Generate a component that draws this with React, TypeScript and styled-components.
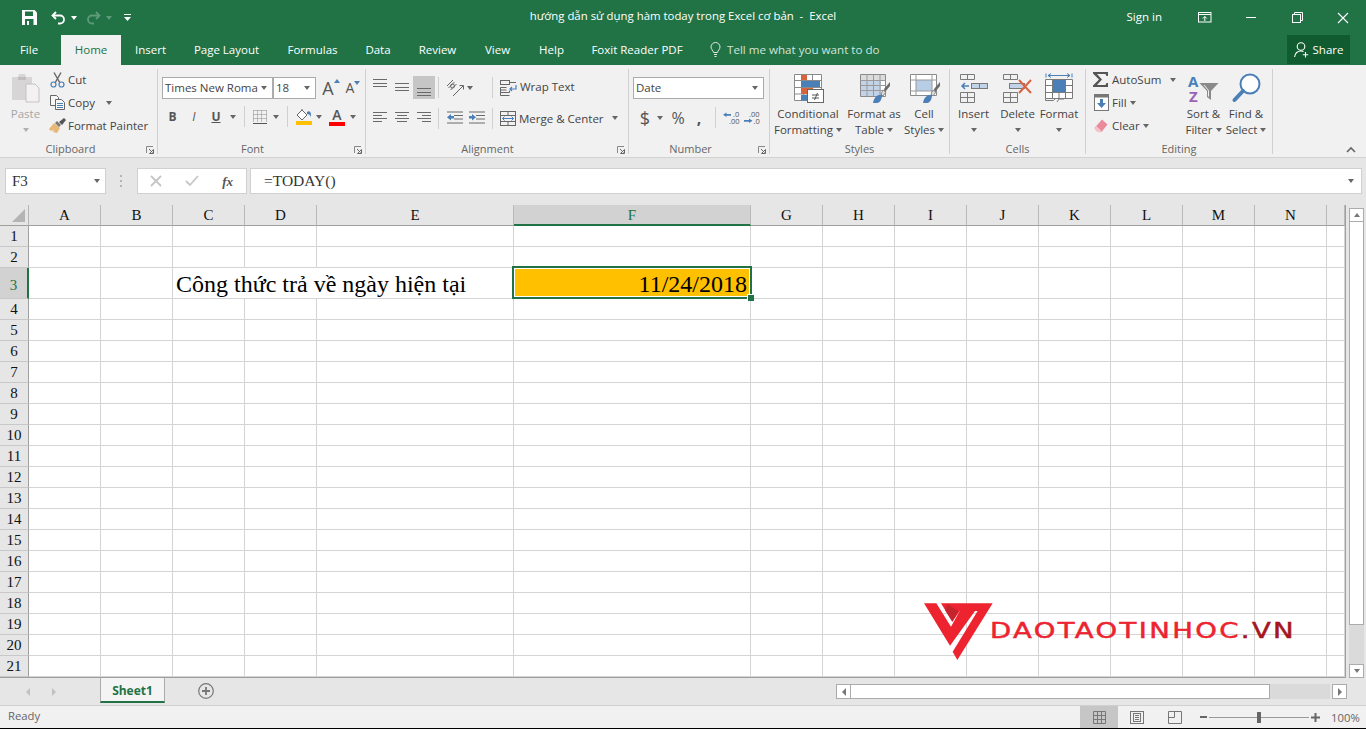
import React from 'react'
import styled, { createGlobalStyle } from 'styled-components'

const UI = '"Open Sans", "Noto Sans", "Liberation Sans", sans-serif'
const SERIF = '"Liberation Serif", "Times New Roman", serif'
const GREEN = '#217346'
const BLUE = '#4a7fb8'

const GlobalStyle = createGlobalStyle`
  html, body { margin: 0; padding: 0; background: #000; overflow: hidden; }
  body { font-family: ${UI}; font-size: 12px; color: #444; }
  * { box-sizing: border-box; }
  svg { overflow: visible; }
`

const Page = styled.div`
  width: 1366px;
  height: 728px;
  background: #f1f1f1;
  display: flex;
  flex-direction: column;
  overflow: hidden;
`

/* title bar */
const TitleBar = styled.div`
  height: 35px;
  background: ${GREEN};
  color: #fff;
  display: grid;
  grid-template-columns: 1fr auto 1fr;
  align-items: center;
`
const Quick = styled.div`
  display: flex;
  align-items: center;
  padding-left: 15px;
`
const QuickBtn = styled.div<{ $w: number; $mr?: number }>`
  width: ${p => p.$w}px;
  margin-right: ${p => p.$mr || 0}px;
  display: flex;
  justify-content: center;
  align-items: center;
`
const Title = styled.div`
  font-size: 11.4px;
  white-space: pre;
  padding-bottom: 4px;
`
const WindowArea = styled.div`
  display: flex;
  justify-content: flex-end;
  align-items: center;
`
const SignIn = styled.div`
  margin-right: 20px;
  padding-bottom: 3px;
  font-size: 11.5px;
`
const WinBtn = styled.div`
  width: 46px;
  display: flex;
  justify-content: center;
`

/* tabs */
const TabRow = styled.div`
  height: 30px;
  background: ${GREEN};
  color: #fff;
  display: flex;
`
const Tab = styled.div<{ $w: number; $on?: boolean; $mr?: number }>`
  width: ${p => p.$w}px;
  margin-right: ${p => p.$mr || 0}px;
  padding-bottom: 1px;
  display: flex;
  justify-content: center;
  align-items: center;
  font-size: 11.5px;
  background: ${p => (p.$on ? '#f1f1f1' : 'transparent')};
  color: ${p => (p.$on ? GREEN : '#fff')};
`
const TellMe = styled.div`
  margin-left: 15px;
  padding-bottom: 2px;
  display: flex;
  align-items: center;
  gap: 6px;
  font-size: 11.6px;
  color: #d3e3da;
`
const ShareBtn = styled.div`
  margin-left: auto;
  margin-right: 16px;
  width: 63px;
  height: 29px;
  background: #105c30;
  display: flex;
  align-items: center;
  justify-content: center;
  gap: 4px;
  font-size: 11.5px;
`

/* ribbon */
const Ribbon = styled.div`
  height: 93px;
  padding-top: 4px;
  background: #f1f1f1;
  border-bottom: 1px solid #d2d2d2;
  display: flex;
  position: relative;
`
const Group = styled.div<{ $w: number }>`
  width: ${p => p.$w}px;
  height: 85px;
  border-right: 1px solid #d0d0d0;
  display: flex;
  flex-direction: column;
  position: relative;
`
const GroupBody = styled.div`
  flex: 1;
  display: flex;
  min-height: 0;
`
const GroupLabel = styled.div<{ $pr?: number }>`
  height: 10px;
  line-height: 10px;
  padding-right: ${p => p.$pr || 0}px;
  text-align: center;
  font-size: 11px;
  color: #666;
`
const Launcher = styled.div`
  position: absolute;
  right: 3px;
  bottom: 0;
  width: 8px;
  height: 8px;
  display: flex;
`
const Collapse = styled.div`
  position: absolute;
  right: 10px;
  bottom: 4px;
  display: flex;
`
const PasteBtn = styled.div`
  width: 41px;
  margin-left: 5px;
  padding-top: 4px;
  display: flex;
  flex-direction: column;
  align-items: center;
  color: #a6a6a6;
  line-height: 16px;
  font-size: 11.5px;
`
const SmallCol = styled.div<{ $ml?: number; $w?: number }>`
  margin-left: ${p => p.$ml || 0}px;
  width: ${p => (p.$w ? p.$w + 'px' : 'auto')};
  margin-top: -1px;
  display: flex;
  flex-direction: column;
`
const SmallRow = styled.div`
  height: 23px;
  display: flex;
  align-items: center;
  white-space: nowrap;
  font-size: 11.5px;
`
const SmallIcon = styled.div`
  width: 16px;
  display: flex;
  justify-content: center;
  margin-right: 3px;
`
const Stack = styled.div<{ $ml?: number; $pt: number; $gap: number }>`
  margin-left: ${p => p.$ml || 0}px;
  padding-top: ${p => p.$pt}px;
  display: flex;
  flex-direction: column;
  gap: ${p => p.$gap}px;
`
const ToolRow = styled.div<{ $h?: number }>`
  height: ${p => p.$h || 22}px;
  display: flex;
  align-items: center;
`
const Tool = styled.div<{ $w: number; $on?: boolean }>`
  width: ${p => p.$w}px;
  height: ${p => (p.$on ? '23px' : 'auto')};
  display: flex;
  justify-content: center;
  align-items: center;
  background: ${p => (p.$on ? '#c6c6c6' : 'transparent')};
`
const CaretSlot = styled.div<{ $w: number }>`
  width: ${p => p.$w}px;
  display: flex;
  justify-content: center;
`
const Caret = styled.span<{ $up?: boolean; $c?: string }>`
  display: inline-block;
  flex: none;
  width: 0;
  height: 0;
  border-left: 3.5px solid transparent;
  border-right: 3.5px solid transparent;
  ${p => (p.$up ? 'border-bottom' : 'border-top')}: 4px solid ${p => p.$c || '#666'};
`
const VSep = styled.div<{ $ml: number; $mr: number }>`
  width: 1px;
  height: 21px;
  margin: 0 ${p => p.$mr}px 0 ${p => p.$ml}px;
  background: #d0d0d0;
`
const Select = styled.div<{ $w: number }>`
  width: ${p => p.$w}px;
  height: 22px;
  background: #fff;
  border: 1px solid #ababab;
  display: flex;
  align-items: center;
  justify-content: space-between;
  padding: 0 5px 1px 2px;
  font-size: 11.5px;
  white-space: nowrap;
`
const FontName = styled.span`
  width: 94px;
`
const FontGlyph = styled.span<{ $size?: number; $w?: number; $i?: boolean; $u?: boolean; $serif?: boolean }>`
  font-family: ${p => (p.$serif ? SERIF : UI)};
  font-size: ${p => p.$size || 12}px;
  font-weight: ${p => p.$w || 400};
  font-style: ${p => (p.$i ? 'italic' : 'normal')};
  text-decoration: ${p => (p.$u ? 'underline' : 'none')};
  line-height: 1;
  color: #555;
`
const GrowGlyph = styled.div`
  position: relative;
  display: flex;
`
const GrowMark = styled.span`
  position: absolute;
  right: -6px;
  top: 0;
  display: flex;
`
const ColorA = styled.div`
  display: flex;
  flex-direction: column;
  align-items: center;
  width: 16px;
  line-height: 1;
`
const ColorBar = styled.div<{ $c: string }>`
  width: 16px;
  height: 4px;
  background: ${p => p.$c};
`
const ToolText = styled.span<{ $ml?: number; $raise?: boolean }>`
  margin-left: ${p => p.$ml ?? 3}px;
  margin-bottom: ${p => (p.$raise ? '2px' : '0')};
  font-size: 11.5px;
  white-space: nowrap;
`
const InlineCaret = styled.span<{ $ml?: number }>`
  margin-left: ${p => p.$ml ?? 3}px;
  display: flex;
`
const BigBtn = styled.div<{ $w: number }>`
  width: ${p => p.$w}px;
  padding-top: 4px;
  display: flex;
  flex-direction: column;
  align-items: center;
  font-size: 11.5px;
  line-height: 16px;
  white-space: nowrap;
`
const BigIcon = styled.div`
  height: 30px;
  margin-bottom: 3px;
  display: flex;
  align-items: center;
`
const BigLine = styled.div`
  height: 16px;
  display: flex;
  align-items: center;
  gap: 3px;
`

/* formula bar */
const FormulaBar = styled.div`
  height: 47px;
  background: #e6e6e6;
  padding: 10px 4px 0 5px;
  display: flex;
  align-items: flex-start;
`
const NameBox = styled.div`
  width: 101px;
  height: 26px;
  background: #fff;
  border: 1px solid #d0d0d0;
  display: flex;
  align-items: center;
  justify-content: space-between;
  padding: 0 5px 0 6px;
  font-family: ${SERIF};
  font-size: 15px;
  color: #333;
`
const Dots = styled.div`
  width: 31px;
  height: 26px;
  display: flex;
  justify-content: center;
  align-items: center;
`
const FxBox = styled.div`
  width: 110px;
  height: 26px;
  background: #fff;
  border: 1px solid #d0d0d0;
  display: flex;
  align-items: center;
  justify-content: space-between;
  padding: 0 13px 0 12px;
`
const Formula = styled.div`
  flex: 1;
  height: 26px;
  margin-left: 3px;
  background: #fff;
  border: 1px solid #d0d0d0;
  display: flex;
  align-items: center;
  justify-content: space-between;
  padding: 0 7px 0 13px;
  font-family: ${SERIF};
  font-size: 15.5px;
  color: #333;
`

/* sheet */
const Main = styled.div`
  height: 473px;
  display: flex;
  background: #e6e6e6;
`
const Sheet = styled.div`
  width: 1346px;
  position: relative;
  display: grid;
  grid-template-columns: 29px 72px 72px 72px 72px 197px 237px 72px 72px 72px 72px 72px 72px 72px 72px 18px;
  grid-template-rows: 21px 21px 21px 31px repeat(18, 21px);
  border-right: 1px solid #9f9f9f;
  border-bottom: 1px solid #9f9f9f;
  background: #fff;
`
const Corner = styled.div`
  background: #e6e6e6;
  border-right: 1px solid #b5b5b5;
  border-bottom: 1px solid #9f9f9f;
  display: flex;
  align-items: flex-end;
  justify-content: flex-end;
  padding: 0 3px 3px 0;
`
const ColHead = styled.div<{ $on?: boolean }>`
  background: ${p => (p.$on ? '#d2d2d2' : '#e6e6e6')};
  border-right: 1px solid #b9b9b9;
  border-bottom: ${p => (p.$on ? `2px solid ${GREEN}` : '1px solid #9f9f9f')};
  padding-top: ${p => (p.$on ? '2px' : '1px')};
  font-family: ${SERIF};
  font-size: 15px;
  color: ${p => (p.$on ? GREEN : '#111')};
  display: flex;
  align-items: center;
  justify-content: center;
`
const RowHead = styled.div<{ $on?: boolean }>`
  background: ${p => (p.$on ? '#d2d2d2' : '#e6e6e6')};
  border-right: ${p => (p.$on ? `2px solid ${GREEN}` : '1px solid #9f9f9f')};
  border-bottom: 1px solid #c8c8c8;
  font-family: ${SERIF};
  font-size: 15px;
  color: ${p => (p.$on ? GREEN : '#111')};
  display: flex;
  align-items: center;
  justify-content: center;
  padding-top: ${p => (p.$on ? '5px' : '0')};
`
const Cell = styled.div<{ $span?: number }>`
  grid-column: span ${p => p.$span || 1};
  border-right: 1px solid #d4d4d4;
  border-bottom: 1px solid #d4d4d4;
  font-family: ${SERIF};
  font-size: 24px;
  color: #000;
  white-space: nowrap;
  padding: 2px 3px 0;
  display: flex;
  align-items: center;
  overflow: visible;
`
const ActiveCell = styled(Cell)`
  position: relative;
  background: #ffc000;
  justify-content: flex-end;
  &::before {
    content: '';
    position: absolute;
    left: -2px;
    top: -2px;
    right: -2px;
    bottom: -1px;
    border: 2px solid ${GREEN};
    box-shadow: inset 0 0 0 1px #fff;
  }
  &::after {
    content: '';
    position: absolute;
    right: -4px;
    bottom: -3px;
    width: 6px;
    height: 6px;
    background: ${GREEN};
    border: 1px solid #fff;
    border-right: 0;
    border-bottom: 0;
  }
`
const Watermark = styled.div`
  position: absolute;
  left: 915px;
  top: 390px;
  display: flex;
  align-items: flex-start;
  pointer-events: none;
`
const WordMark = styled.div`
  margin: 23px 0 0 -5px;
  font-family: "DejaVu Sans", sans-serif;
  font-size: 22px;
  line-height: 26px;
  letter-spacing: 1.9px;
  color: #ed2330;
  -webkit-text-stroke: 0.5px currentColor;
  white-space: nowrap;
  transform: scaleX(1.25);
  transform-origin: left center;
`
const WordEnd = styled.span`
  color: #a6141f;
`

/* scrollbars */
const VScroll = styled.div`
  width: 20px;
  padding: 3px 2px 0 3px;
  display: flex;
  flex-direction: column;
`
const ScrollBtn = styled.div`
  height: 14px;
  flex: none;
  background: #fff;
  border: 1px solid #ababab;
  display: flex;
  align-items: center;
  justify-content: center;
`
const VThumb = styled.div`
  height: 403px;
  flex: none;
  background: #fff;
  border-left: 1px solid #ababab;
  border-right: 1px solid #ababab;
  border-bottom: 1px solid #ababab;
`
const VTrack = styled.div`
  flex: 1;
  background: #dadada;
`
const SheetBar = styled.div`
  height: 28px;
  flex: none;
  background: #e6e6e6;
  border-bottom: 1px solid #d0d0d0;
  display: flex;
  align-items: flex-start;
`
const NavArrows = styled.div`
  width: 100px;
  height: 27px;
  padding-left: 26px;
  display: flex;
  align-items: center;
  gap: 22px;
`
const SheetTab = styled.div`
  width: 65px;
  height: 26px;
  margin-top: -1px;
  padding-top: 3px;
  background: #f4f4f4;
  border-left: 1px solid #ababab;
  border-right: 1px solid #ababab;
  border-bottom: 2px solid ${GREEN};
  color: ${GREEN};
  font-size: 12px;
  font-weight: 700;
  display: flex;
  align-items: center;
  justify-content: center;
`
const AddSheet = styled.div`
  margin: 5px 0 0 33px;
  display: flex;
`
const HScroll = styled.div`
  margin: 6px 19px 0 auto;
  width: 511px;
  height: 15px;
  display: flex;
`
const HBtn = styled.div`
  width: 15px;
  flex: none;
  background: #fff;
  border: 1px solid #ababab;
  display: flex;
  align-items: center;
  justify-content: center;
`
const HThumb = styled.div`
  width: 419px;
  flex: none;
  background: #fff;
  border: 1px solid #ababab;
  border-left: 0;
`
const HTrack = styled.div`
  flex: 1;
  margin-right: 2px;
  background: #dadada;
`
const Triangle = styled.span<{ $left?: boolean; $c?: string }>`
  display: inline-block;
  width: 0;
  height: 0;
  border-top: 4px solid transparent;
  border-bottom: 4px solid transparent;
  ${p => (p.$left ? 'border-right' : 'border-left')}: 4px solid ${p => p.$c || '#777'};
`

/* status bar */
const StatusBar = styled.div`
  flex: 1;
  background: #f1f1f1;
  padding-left: 8px;
  display: flex;
  align-items: center;
  font-size: 11.3px;
  color: #666;
`
const ReadyText = styled.span`
  padding-bottom: 3px;
`
const StatusRight = styled.div`
  margin-left: auto;
  height: 100%;
  display: flex;
  align-items: center;
`
const ViewBtn = styled.div<{ $on?: boolean }>`
  width: 38px;
  height: 100%;
  background: ${p => (p.$on ? '#c6c6c6' : 'transparent')};
  display: flex;
  align-items: center;
  justify-content: center;
`
const ZoomMinus = styled.div`
  width: 7px;
  height: 2px;
  margin-left: 6px;
  background: #666;
`
const ZoomSlider = styled.div`
  width: 100px;
  height: 1px;
  margin: 0 2px;
  background: #9a9a9a;
  display: flex;
  justify-content: center;
  align-items: center;
`
const ZoomKnob = styled.div`
  width: 4px;
  height: 11px;
  background: #666;
`
const ZoomLabel = styled.div`
  width: 35px;
  margin-left: 11px;
  font-size: 11.3px;
`

/* icons */
const Lines = ({ w = 14, h = 20, rows, c = '#6a6a6a' }: { w?: number; h?: number; rows: number[][]; c?: string }) => (
  <svg width={w} height={h} viewBox={`0 0 ${w} ${h}`}>
    {rows.map((r, i) => <rect key={i} x={r[0]} y={r[1]} width={r[2]} height="1" fill={c} />)}
  </svg>
)

const Launch = () => (
  <svg width="8" height="8" viewBox="0 0 8 8">
    <path d="M0.5 7V0.5H7" fill="none" stroke="#888" />
    <path d="M3 3l3.5 3.5M7.5 3.5v4h-4z" fill="none" stroke="#666" />
  </svg>
)

const SaveIcon = () => (
  <svg width="15" height="15" viewBox="0 0 15 15">
    <path d="M0 0h12.5L15 2.5V15H0z" fill="#fff" />
    <rect x="3" y="1.5" width="8" height="4.5" fill={GREEN} />
    <rect x="3" y="9" width="8.5" height="6" fill={GREEN} />
    <rect x="5" y="11" width="2" height="4" fill="#fff" />
  </svg>
)
const UndoIcon = () => (
  <svg width="15" height="14" viewBox="0 0 15 14">
    <path d="M5 1L1.5 4.5 5 8" fill="none" stroke="#fff" strokeWidth="1.8" />
    <path d="M2 4.5h7a4 4 0 0 1 0 8H7" fill="none" stroke="#fff" strokeWidth="1.8" />
  </svg>
)
const RedoIcon = () => (
  <svg width="15" height="14" viewBox="0 0 15 14">
    <path d="M10 1l3.5 3.5L10 8" fill="none" stroke="#5f9a7b" strokeWidth="1.8" />
    <path d="M13 4.5H6a4 4 0 0 0 0 8h2" fill="none" stroke="#5f9a7b" strokeWidth="1.8" />
  </svg>
)
const CustomizeIcon = () => (
  <svg width="7" height="8" viewBox="0 0 7 8">
    <rect x="0" y="0" width="7" height="1" fill="#fff" />
    <path d="M0 3h7L3.5 7z" fill="#fff" />
  </svg>
)
const DisplayIcon = () => (
  <svg width="14" height="11" viewBox="0 0 14 11" fill="none" stroke="#fff">
    <rect x="0.5" y="0.5" width="12.5" height="9.5" />
    <path d="M0.5 2.5h12.5M6.8 9V4.5M4.8 6.5l2-2 2 2" />
  </svg>
)
const MinIcon = () => <svg width="11" height="11" viewBox="0 0 11 11"><rect y="5" width="10" height="1" fill="#fff" /></svg>
const RestoreIcon = () => (
  <svg width="11" height="11" viewBox="0 0 11 11" fill="none" stroke="#fff">
    <rect x="0.5" y="2.5" width="8" height="8" />
    <path d="M2.5 2.5v-2h8v8h-2" />
  </svg>
)
const CloseIcon = () => (
  <svg width="12" height="12" viewBox="0 0 12 12"><path d="M1 1l10 10M11 1L1 11" stroke="#fff" strokeWidth="1.1" /></svg>
)
const BulbIcon = () => (
  <svg width="11" height="15" viewBox="0 0 11 15" fill="none" stroke="#dfeae4">
    <path d="M3.5 10.5C3.3 8.5 1 7.5 1 5a4.5 4.5 0 0 1 9 0c0 2.5-2.3 3.5-2.5 5.5z" />
    <path d="M4 12.5h3M4.5 14.5h2" />
  </svg>
)
const ShareIcon = () => (
  <svg width="15" height="16" viewBox="0 0 15 16" fill="none" stroke="#fff" strokeWidth="1.1">
    <circle cx="7" cy="4.5" r="3.8" />
    <path d="M0.6 15c0.5-3.5 2.5-6 6.4-6 1 0 1.8 0.2 2.5 0.5M11.5 10v5.5M8.8 12.8h5.4" />
  </svg>
)
const PasteIcon = () => (
  <svg width="29" height="30" viewBox="0 0 29 30">
    <path d="M1 4h6l1-3h6l1 3h6v23H1z" fill="#d8d5d7" />
    <rect x="7" y="4" width="8" height="3" fill="#c0bcbf" />
    <path d="M15 11h9l4 4v14H15z" fill="#f3f1f2" stroke="#c6c2c5" />
  </svg>
)
const CutIcon = () => (
  <svg width="15" height="16" viewBox="0 0 15 16" fill="none">
    <path d="M4 0.5L10 11M11 0.5L5 11" stroke="#6a6a6a" strokeWidth="1.5" />
    <circle cx="3.5" cy="12.5" r="2.5" stroke={BLUE} strokeWidth="1.2" />
    <circle cx="11.5" cy="12.5" r="2.5" stroke={BLUE} strokeWidth="1.2" />
  </svg>
)
const CopyIcon = () => (
  <svg width="15" height="15" viewBox="0 0 15 15" fill="#f6f6f6" stroke="#666">
    <path d="M0.5 0.5h6l2 2v8h-8z" />
    <path d="M5.5 4.5h6l3 3v7h-9z" />
    <path d="M7 8.5h6M7 10.5h6M7 12.5h6" stroke={BLUE} />
  </svg>
)
const PainterIcon = () => (
  <svg width="17" height="16" viewBox="0 0 17 16">
    <path d="M0 11l5-6 6 5-3 5-4-1 1-2-3 1z" fill="#e8b878" />
    <path d="M6 5l2-2 4 4-2 2z" fill="#777" />
    <path d="M10 4l5-4 2 2-4 5z" fill="#555" />
  </svg>
)
const FillIcon = () => (
  <svg width="16" height="12" viewBox="0 0 16 12">
    <path d="M1 6l5-5 5 5-5 5z" fill="#fff" stroke="#666" />
    <path d="M6 1V0" stroke="#666" />
    <path d="M11 3c2-1.5 4-0.5 4 3l0 2c-1-2-2-3-4-3z" fill={BLUE} />
  </svg>
)
const BordersIcon = () => (
  <svg width="14" height="14" viewBox="0 0 14 14">
    <path d="M0.5 0.5h13M0.5 4.5h13M0.5 8.5h13M0.5 0.5v12M4.5 0.5v12M8.5 0.5v12M13.5 0.5v12" stroke="#888" strokeDasharray="1 1" fill="none" />
    <rect y="13" width="14" height="1" fill="#555" />
  </svg>
)
const OrientIcon = () => (
  <svg width="19" height="18" viewBox="0 0 19 18" fill="none" stroke="#666">
    <path d="M1 7l6-6M2.5 9l6-6M4.5 11l6-6" />
    <circle cx="6.5" cy="7" r="2" stroke="#666" />
    <path d="M7 17L17 7M13.5 6.5H17.5V10.5" stroke="#666" />
  </svg>
)
const IndentIcon = ({ flip }: { flip?: boolean }) => (
  <svg width="16" height="14" viewBox="0 0 16 14">
    <path d="M0 1h16M7 4.5h9M7 8h9M0 12h16" stroke="#6a6a6a" />
    {flip
      ? <path d="M0 5h3V3l4 3.2-4 3.2V7.4H0z" fill={BLUE} />
      : <path d="M7 5H4V3L0 6.2l4 3.2V7.4h3z" fill={BLUE} />}
  </svg>
)
const WrapIcon = () => (
  <svg width="17" height="16" viewBox="0 0 17 16" fill="none">
    <rect x="0.5" y="0.5" width="9" height="4" stroke="#666" />
    <path d="M0.5 7.5h6M0.5 10h6M0.5 12.5h9v-2M0.5 7.5v8h9" stroke="#666" />
    <path d="M10 2.5h6" stroke="#666" />
    <path d="M16 5v4h-6M12 7l-2 2 2 2" stroke={BLUE} strokeWidth="1.2" />
  </svg>
)
const MergeIcon = () => (
  <svg width="16" height="15" viewBox="0 0 16 15" fill="none" stroke="#666">
    <rect x="0.5" y="0.5" width="15" height="14" />
    <path d="M0.5 4.5h15M0.5 10.5h15M8 0.5v4M8 10.5v4" />
    <path d="M2.5 7.5h11M4.5 5.5l-2 2 2 2M11.5 5.5l2 2-2 2" stroke={BLUE} />
  </svg>
)
const DecInc = () => (
  <svg width="19" height="14" viewBox="0 0 19 14">
    <path d="M8 3H3.5V1.500L0 3.800l3.500 2.300V4.800H8z" fill={BLUE} />
    <text x="10" y="6" fontSize="7.5" fontFamily={UI} fill="#555">.0</text>
    <text x="6" y="13" fontSize="7.5" fontFamily={UI} fill="#555">.00</text>
  </svg>
)
const DecDec = () => (
  <svg width="18" height="14" viewBox="0 0 18 14">
    <text x="5" y="6" fontSize="7.5" fontFamily={UI} fill="#555">.00</text>
    <path d="M0 9h5V7.500l3.500 2.300L5 12v-1.300H0z" fill={BLUE} />
    <text x="9.5" y="13" fontSize="7.5" fontFamily={UI} fill="#555">.0</text>
  </svg>
)
const CondIcon = () => (
  <svg width="31" height="30" viewBox="0 0 31 30">
    <path d="M1.5 1.5h27v26h-27zM10.5 1.5v26M19.5 1.5v20M1.5 7.5h27M1.5 14.5h27M1.5 21h27" fill="#fff" stroke="#8a8a8a" />
    <rect x="8" y="2" width="6" height="5" fill="#d9623f" />
    <rect x="8" y="8" width="19" height="6" fill={BLUE} />
    <rect x="8" y="15" width="12" height="6" fill="#d9623f" />
    <rect x="8" y="22" width="6" height="5.5" fill={BLUE} />
    <rect x="14.5" y="16.5" width="16" height="13" fill="#fff" stroke="#666" />
    <path d="M19 22h7M19 25h7M24.5 20l-3 7" stroke="#555" fill="none" />
  </svg>
)
const BrushOver = () => (
  <>
    <path d="M14 30c1-6 5-9 9-8 0 4-2 8-5 8z" fill={BLUE} />
    <path d="M22 21l2-4 3 2-3 4z" fill="#ddd" stroke="#888" />
    <path d="M25 16l6-7v4l-5 6z" fill="#6a6a6a" />
  </>
)
const TableIcon = () => (
  <svg width="31" height="30" viewBox="0 0 31 30">
    <path d="M1.5 1.5h25v22h-25z" fill="#fff" stroke="#8a8a8a" />
    <rect x="2" y="2" width="24" height="5" fill="#dcdcdc" />
    <rect x="2" y="8" width="20" height="15" fill="#c2d3e8" />
    <path d="M1.5 7.5h25M1.5 12.5h25M1.5 17.5h25M8 1.5v22M14.5 1.5v22M21 1.5v22" stroke="#9a9a9a" fill="none" />
    <BrushOver />
  </svg>
)
const StylesIcon = () => (
  <svg width="31" height="30" viewBox="0 0 31 30">
    <path d="M1.5 1.5h26v21h-26z" fill="#fff" stroke="#8a8a8a" />
    <rect x="7" y="7" width="16" height="11" fill="#b8cde6" />
    <path d="M1.5 7h26M1.5 18h26M7 1.5v21M23 1.5v21" stroke="#9a9a9a" fill="none" />
    <BrushOver />
  </svg>
)
const InsertIcon = () => (
  <svg width="28" height="29" viewBox="0 0 28 29" fill="none" stroke="#7a7a7a">
    <path d="M0.5 0.5h14v5h-14zM7.5 0.5v5" />
    <path d="M0.5 18.5h14v10h-14zM0.5 23.5h14M7.5 18.5v10" />
    <rect x="11.5" y="9.5" width="16" height="5" fill="#c2d3e8" stroke="#7a7a7a" />
    <path d="M19.5 9.5v5" />
    <path d="M9 12H2M5 9l-3 3 3 3" stroke={BLUE} strokeWidth="1.5" />
  </svg>
)
const DeleteIcon = () => (
  <svg width="30" height="29" viewBox="0 0 30 29" fill="none" stroke="#7a7a7a">
    <path d="M0.5 0.5h14v5h-14zM7.5 0.5v5" />
    <path d="M0.5 18.5h14v10h-14zM0.5 23.5h14M7.5 18.5v10" />
    <rect x="6.5" y="9.5" width="15" height="5" fill="#c2d3e8" stroke="#7a7a7a" />
    <path d="M16 6l12 13M28 6L16 19" stroke="#d9623f" strokeWidth="2" />
  </svg>
)
const FormatIcon = () => (
  <svg width="28" height="30" viewBox="0 0 28 30" fill="none" stroke="#7a7a7a">
    <path d="M1 0.5v4M27 0.5v4M3 2.5h22M6 0.5l-3 2 3 2M22 0.5l3 2-3 2" stroke={BLUE} />
    <path d="M0.5 6.5h27v19h-27z" fill="#fff" />
    <path d="M0.5 12.5h27M0.5 19.5h27M7.5 6.5v19M20.5 6.5v19M14 6.5v19" />
    <rect x="8" y="7" width="12" height="12" fill={BLUE} stroke="none" />
    <path d="M0.5 25.5v2h8l2-2M12 29l2-3h5" />
  </svg>
)
const SigmaIcon = () => (
  <svg width="16" height="15" viewBox="0 0 16 15">
    <path d="M0 0h15v4h-1.5l-1-2H4l5 5.5L4 13h8.5l1-2H15v4H0v-1.5L6 7.5 0 1.5z" fill="#555" />
  </svg>
)
const FillDownIcon = () => (
  <svg width="15" height="17" viewBox="0 0 15 17">
    <rect x="0.5" y="0.5" width="14" height="16" fill="#fff" stroke="#777" />
    <rect x="1" y="1" width="13" height="2.5" fill="#777" />
    <path d="M6 5h3v4h3l-4.500 5L3 9h3z" fill={BLUE} />
  </svg>
)
const EraserIcon = () => (
  <svg width="14" height="14" viewBox="0 0 14 14">
    <path d="M8 0.5l5.5 5-6 7.5-5-1-2-3z" fill="#eb8a9a" />
    <path d="M0.5 9.5l2-2.5 5 5-1 1.5-3.5-0.5z" fill="#f4c3cb" />
  </svg>
)
const SortIcon = () => (
  <svg width="31" height="30" viewBox="0 0 31 30">
    <text x="0" y="14" fontSize="15" fontWeight="700" fontFamily={UI} fill={BLUE}>A</text>
    <text x="1" y="29" fontSize="15" fontWeight="700" fontFamily={UI} fill="#9b63b8">Z</text>
    <path d="M11.5 10h19l-7.5 8v9l-4-3v-6z" fill="#8a8a8a" />
    <path d="M16 12l4.5 5.5v6" stroke="#f1f1f1" fill="none" />
  </svg>
)
const FindIcon = () => (
  <svg width="29" height="30" viewBox="0 0 29 30" fill="none" stroke={BLUE}>
    <circle cx="18" cy="11" r="9.5" strokeWidth="2" fill="#fdfdfd" />
    <path d="M11 18L2.5 27" strokeWidth="4" strokeLinecap="round" />
  </svg>
)
const CancelIcon = () => (
  <svg width="12" height="12" viewBox="0 0 12 12"><path d="M1 1l10 10M11 1L1 11" stroke="#c6c6c6" strokeWidth="1.8" /></svg>
)
const EnterIcon = () => (
  <svg width="14" height="12" viewBox="0 0 14 12"><path d="M1 6l4 4 8-9" fill="none" stroke="#c6c6c6" strokeWidth="1.8" /></svg>
)
const DotsIcon = () => (
  <svg width="3" height="12" viewBox="0 0 3 12" fill="#b4b4b4">
    <rect x="0" y="0" width="2" height="2" /><rect x="0" y="5" width="2" height="2" /><rect x="0" y="10" width="2" height="2" />
  </svg>
)
const CornerIcon = () => (
  <svg width="13" height="13" viewBox="0 0 13 13"><path d="M13 0v13H0z" fill="#b4b4b4" /></svg>
)
const AddIcon = () => (
  <svg width="16" height="16" viewBox="0 0 16 16" fill="none" stroke="#777">
    <circle cx="8" cy="8" r="7.3" strokeWidth="1.2" />
    <path d="M8 4v8M4 8h8" strokeWidth="1.8" />
  </svg>
)
const NormalView = () => (
  <svg width="13" height="13" viewBox="0 0 13 13" fill="none" stroke="#777">
    <path d="M0.5 0.5h12v12h-12zM0.5 4.5h12M0.5 8.5h12M4.5 0.5v12M8.5 0.5v12" />
  </svg>
)
const LayoutView = () => (
  <svg width="14" height="13" viewBox="0 0 14 13" fill="none" stroke="#777">
    <rect x="0.5" y="0.5" width="13" height="12" />
    <rect x="3.5" y="2.5" width="7" height="8" />
    <path d="M5 4.5h4M5 6.5h4M5 8.5h4" />
  </svg>
)
const BreakView = () => (
  <svg width="14" height="13" viewBox="0 0 14 13" fill="none" stroke="#777">
    <path d="M0.5 0.5h13v12h-13zM6.5 0.5v6h-6" />
  </svg>
)
const LogoMark = () => (
  <svg width="80" height="67" viewBox="0 0 240 201">
    <path d="M27 25h37l44 70 26-47h46L105 152z" fill="#ed2330" />
    <path d="M78 25h155L127 195l-14-25 75-122h-54l-22 32z" fill="#ed2330" />
    <path d="M98 28l32 20-18 32-22-35z" fill="#c5242c" />
  </svg>
)

const columns = ['A', 'B', 'C', 'D', 'E', 'F', 'G', 'H', 'I', 'J', 'K', 'L', 'M', 'N', '']
const rows = Array.from({ length: 21 }, (_, i) => i + 1)

const leftRows = [[0, 4, 14], [0, 7, 9], [0, 10, 14], [0, 13, 9]]
const centerRows = [[0, 4, 14], [2, 7, 10], [0, 10, 14], [2, 13, 10]]
const rightRows = [[0, 4, 14], [5, 7, 9], [0, 10, 14], [5, 13, 9]]

const Grid = () => (
  <Sheet>
    <Corner><CornerIcon /></Corner>
    {columns.map((c, i) => <ColHead key={i} $on={c === 'F'}>{c}</ColHead>)}
    {rows.map(r => (
      <React.Fragment key={r}>
        <RowHead $on={r === 3}>{r}</RowHead>
        {r === 3 ? (
          <>
            <Cell /><Cell />
            <Cell $span={3}>Công thức trả về ngày hiện tại</Cell>
            <ActiveCell>11/24/2018</ActiveCell>
            {columns.slice(6).map((c, i) => <Cell key={i} />)}
          </>
        ) : columns.map((c, i) => <Cell key={i} />)}
      </React.Fragment>
    ))}
    <Watermark>
      <LogoMark />
      <WordMark>DAOTAOTINHOC<WordEnd>.VN</WordEnd></WordMark>
    </Watermark>
  </Sheet>
)

const RibbonGroups = () => (
  <Ribbon>
    <Group $w={158}>
      <GroupBody>
        <PasteBtn>
          <BigIcon><PasteIcon /></BigIcon>
          Paste
          <BigLine><Caret $c="#b0b0b0" /></BigLine>
        </PasteBtn>
        <SmallCol $ml={3}>
          <SmallRow><SmallIcon><CutIcon /></SmallIcon>Cut</SmallRow>
          <SmallRow><SmallIcon><CopyIcon /></SmallIcon>Copy<InlineCaret $ml={11}><Caret /></InlineCaret></SmallRow>
          <SmallRow><SmallIcon><PainterIcon /></SmallIcon>Format Painter</SmallRow>
        </SmallCol>
      </GroupBody>
      <GroupLabel $pr={16}>Clipboard</GroupLabel>
      <Launcher><Launch /></Launcher>
    </Group>

    <Group $w={208}>
      <GroupBody>
        <Stack $ml={4} $pt={8} $gap={6}>
          <ToolRow>
            <Select $w={111}><FontName>Times New Roma</FontName><Caret /></Select>
            <Select $w={43}>18<Caret /></Select>
            <Tool $w={24}>
              <GrowGlyph><FontGlyph $size={18}>A</FontGlyph><GrowMark><Caret $up $c={BLUE} /></GrowMark></GrowGlyph>
            </Tool>
            <Tool $w={20}>
              <GrowGlyph><FontGlyph $size={14}>A</FontGlyph><GrowMark><Caret $c={BLUE} /></GrowMark></GrowGlyph>
            </Tool>
          </ToolRow>
          <ToolRow $h={23}>
            <Tool $w={21}><FontGlyph $w={700}>B</FontGlyph></Tool>
            <Tool $w={22}><FontGlyph $i>I</FontGlyph></Tool>
            <Tool $w={22}><FontGlyph $w={700} $u>U</FontGlyph></Tool>
            <CaretSlot $w={12}><Caret /></CaretSlot>
            <VSep $ml={5} $mr={5} />
            <Tool $w={19}><BordersIcon /></Tool>
            <CaretSlot $w={13}><Caret /></CaretSlot>
            <VSep $ml={5} $mr={4} />
            <Tool $w={23}>
              <ColorA><FillIcon /><ColorBar $c="#ffc000" /></ColorA>
            </Tool>
            <CaretSlot $w={8}><Caret /></CaretSlot>
            <Tool $w={28}>
              <ColorA><FontGlyph $size={14} $w={600}>A</FontGlyph><ColorBar $c="#ff0000" /></ColorA>
            </Tool>
            <CaretSlot $w={4}><Caret /></CaretSlot>
          </ToolRow>
        </Stack>
      </GroupBody>
      <GroupLabel $pr={18}>Font</GroupLabel>
      <Launcher><Launch /></Launcher>
    </Group>

    <Group $w={263}>
      <GroupBody>
        <Stack $ml={3} $pt={7} $gap={8}>
          <ToolRow $h={23}>
            <Tool $w={22}><Lines rows={[[0, 1, 14], [0, 5, 14], [0, 8, 14]]} /></Tool>
            <Tool $w={22}><Lines rows={[[0, 5, 14], [0, 9, 14], [0, 12, 14]]} /></Tool>
            <Tool $w={22} $on><Lines rows={[[0, 10, 14], [0, 14, 14], [0, 17, 14]]} /></Tool>
            <VSep $ml={3} $mr={3} />
            <Tool $w={26}><OrientIcon /></Tool>
            <CaretSlot $w={3}><Caret /></CaretSlot>
            <VSep $ml={21} $mr={7} />
            <WrapIcon />
            <ToolText $raise>Wrap Text</ToolText>
          </ToolRow>
          <ToolRow>
            <Tool $w={22}><Lines rows={leftRows} /></Tool>
            <Tool $w={22}><Lines rows={centerRows} /></Tool>
            <Tool $w={22}><Lines rows={rightRows} /></Tool>
            <VSep $ml={3} $mr={8} />
            <Tool $w={16}><IndentIcon /></Tool>
            <Tool $w={28}><IndentIcon flip /></Tool>
            <VSep $ml={1} $mr={7} />
            <MergeIcon />
            <ToolText $ml={3}>Merge &amp; Center</ToolText>
            <CaretSlot $w={22}><Caret /></CaretSlot>
          </ToolRow>
        </Stack>
      </GroupBody>
      <GroupLabel $pr={19}>Alignment</GroupLabel>
      <Launcher><Launch /></Launcher>
    </Group>

    <Group $w={141}>
      <GroupBody>
        <Stack $ml={4} $pt={8} $gap={7}>
          <ToolRow>
            <Select $w={131}>Date<Caret /></Select>
          </ToolRow>
          <ToolRow $h={23}>
            <Tool $w={24}><FontGlyph $size={18}>$</FontGlyph></Tool>
            <CaretSlot $w={6}><Caret /></CaretSlot>
            <Tool $w={30}><FontGlyph $size={16}>%</FontGlyph></Tool>
            <Tool $w={12}><FontGlyph $size={16} $w={700}>,</FontGlyph></Tool>
            <VSep $ml={10} $mr={7} />
            <DecInc />
            <Tool $w={22}><DecDec /></Tool>
          </ToolRow>
        </Stack>
      </GroupBody>
      <GroupLabel $pr={17}>Number</GroupLabel>
      <Launcher><Launch /></Launcher>
    </Group>

    <Group $w={180}>
      <GroupBody>
        <BigBtn $w={76}>
          <BigIcon><CondIcon /></BigIcon>
          Conditional
          <BigLine>Formatting <Caret /></BigLine>
        </BigBtn>
        <BigBtn $w={56}>
          <BigIcon><TableIcon /></BigIcon>
          Format as
          <BigLine>Table <Caret /></BigLine>
        </BigBtn>
        <BigBtn $w={44}>
          <BigIcon><StylesIcon /></BigIcon>
          Cell
          <BigLine>Styles <Caret /></BigLine>
        </BigBtn>
      </GroupBody>
      <GroupLabel>Styles</GroupLabel>
    </Group>

    <Group $w={136}>
      <GroupBody>
        <BigBtn $w={47}>
          <BigIcon><InsertIcon /></BigIcon>
          Insert
          <BigLine><Caret /></BigLine>
        </BigBtn>
        <BigBtn $w={41}>
          <BigIcon><DeleteIcon /></BigIcon>
          Delete
          <BigLine><Caret /></BigLine>
        </BigBtn>
        <BigBtn $w={42}>
          <BigIcon><FormatIcon /></BigIcon>
          Format
          <BigLine><Caret /></BigLine>
        </BigBtn>
      </GroupBody>
      <GroupLabel>Cells</GroupLabel>
    </Group>

    <Group $w={187}>
      <GroupBody>
        <SmallCol $ml={7} $w={90}>
          <SmallRow><SmallIcon><SigmaIcon /></SmallIcon>AutoSum<InlineCaret $ml={9}><Caret /></InlineCaret></SmallRow>
          <SmallRow><SmallIcon><FillDownIcon /></SmallIcon>Fill<InlineCaret><Caret /></InlineCaret></SmallRow>
          <SmallRow><SmallIcon><EraserIcon /></SmallIcon>Clear<InlineCaret><Caret /></InlineCaret></SmallRow>
        </SmallCol>
        <BigBtn $w={41}>
          <BigIcon><SortIcon /></BigIcon>
          Sort &amp;
          <BigLine>Filter <Caret /></BigLine>
        </BigBtn>
        <BigBtn $w={44}>
          <BigIcon><FindIcon /></BigIcon>
          Find &amp;
          <BigLine>Select <Caret /></BigLine>
        </BigBtn>
      </GroupBody>
      <GroupLabel>Editing</GroupLabel>
    </Group>
    <Collapse>
      <svg width="10" height="6" viewBox="0 0 10 6"><path d="M1 5l4-4 4 4" fill="none" stroke="#666" strokeWidth="1.6" /></svg>
    </Collapse>
  </Ribbon>
)

export default function App() {
  return (
    <Page>
      <GlobalStyle />
      <TitleBar>
        <Quick>
          <QuickBtn $w={28} $mr={3}><SaveIcon /></QuickBtn>
          <QuickBtn $w={24}><UndoIcon /></QuickBtn>
          <QuickBtn $w={7} $mr={4}><Caret $c="#fff" /></QuickBtn>
          <QuickBtn $w={24}><RedoIcon /></QuickBtn>
          <QuickBtn $w={7} $mr={6}><Caret $c="#5f9a7b" /></QuickBtn>
          <QuickBtn $w={18}><CustomizeIcon /></QuickBtn>
        </Quick>
        <Title>hướng dẫn sử dụng hàm today trong Excel cơ bản  -  Excel</Title>
        <WindowArea>
          <SignIn>Sign in</SignIn>
          <WinBtn><DisplayIcon /></WinBtn>
          <WinBtn><MinIcon /></WinBtn>
          <WinBtn><RestoreIcon /></WinBtn>
          <WinBtn><CloseIcon /></WinBtn>
        </WindowArea>
      </TitleBar>

      <TabRow>
        <Tab $w={58} $mr={3}>File</Tab>
        <Tab $w={60} $on>Home</Tab>
        <Tab $w={59}>Insert</Tab>
        <Tab $w={93}>Page Layout</Tab>
        <Tab $w={79}>Formulas</Tab>
        <Tab $w={52}>Data</Tab>
        <Tab $w={67}>Review</Tab>
        <Tab $w={53}>View</Tab>
        <Tab $w={55}>Help</Tab>
        <Tab $w={116}>Foxit Reader PDF</Tab>
        <TellMe><BulbIcon />Tell me what you want to do</TellMe>
        <ShareBtn><ShareIcon />Share</ShareBtn>
      </TabRow>

      <RibbonGroups />

      <FormulaBar>
        <NameBox>F3<Caret /></NameBox>
        <Dots><DotsIcon /></Dots>
        <FxBox>
          <CancelIcon />
          <EnterIcon />
          <FontGlyph $size={13} $i $w={700} $serif>fx</FontGlyph>
        </FxBox>
        <Formula>=TODAY()<Caret /></Formula>
      </FormulaBar>

      <Main>
        <Grid />
        <VScroll>
          <ScrollBtn><Caret $up $c="#777" /></ScrollBtn>
          <VThumb />
          <VTrack />
          <ScrollBtn><Caret $c="#777" /></ScrollBtn>
        </VScroll>
      </Main>

      <SheetBar>
        <NavArrows>
          <Triangle $left $c="#c0c0c0" />
          <Triangle $c="#c0c0c0" />
        </NavArrows>
        <SheetTab>Sheet1</SheetTab>
        <AddSheet><AddIcon /></AddSheet>
        <HScroll>
          <HBtn><Triangle $left /></HBtn>
          <HThumb />
          <HTrack />
          <HBtn><Triangle /></HBtn>
        </HScroll>
      </SheetBar>

      <StatusBar>
        <ReadyText>Ready</ReadyText>
        <StatusRight>
          <ViewBtn $on><NormalView /></ViewBtn>
          <ViewBtn><LayoutView /></ViewBtn>
          <ViewBtn><BreakView /></ViewBtn>
          <ZoomMinus />
          <ZoomSlider><ZoomKnob /></ZoomSlider>
          <svg width="9" height="9" viewBox="0 0 9 9"><path d="M4.5 0v9M0 4.5h9" stroke="#666" strokeWidth="2" /></svg>
          <ZoomLabel>100%</ZoomLabel>
        </StatusRight>
      </StatusBar>
    </Page>
  )
}
